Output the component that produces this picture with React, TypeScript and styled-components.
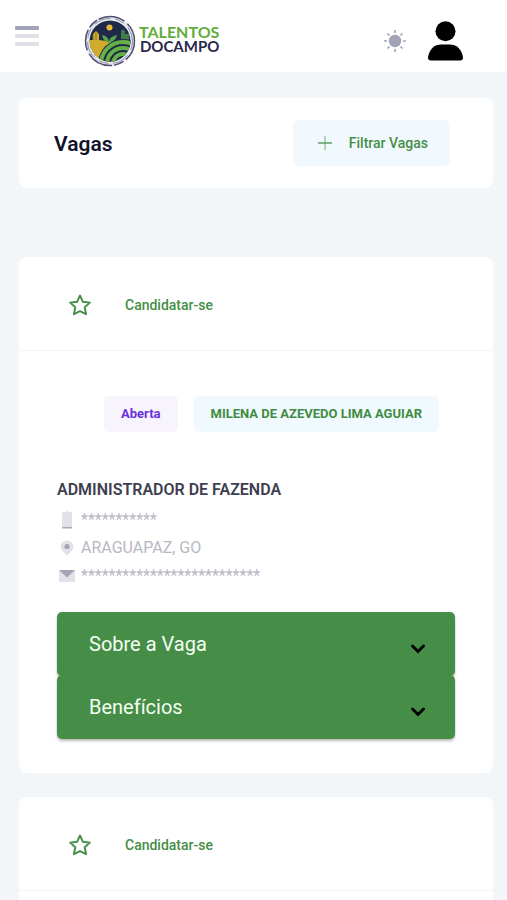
import React from 'react';
import styled, { createGlobalStyle } from 'styled-components';

const GlobalStyle = createGlobalStyle`
  *, *::before, *::after { box-sizing: border-box; }
  body {
    margin: 0;
    background: #f3f6f8;
    font-family: Roboto, sans-serif;
    color: #12122b;
  }
  button { font-family: inherit; border: 0; padding: 0; background: none; cursor: pointer; }
  svg { display: block; flex: none; }
`;

const Page = styled.div`
  display: flex;
  flex-direction: column;
  height: 100vh;
  overflow: hidden;
`;

const TopBar = styled.header`
  display: flex;
  flex: none;
  align-items: center;
  height: 72px;
  padding: 0 43px 0 15px;
  background: #fff;
`;

const MenuButton = styled.button`
  display: grid;
  gap: 4px;
  width: 24px;
`;

const MenuBar = styled.span<{ $strong?: boolean }>`
  height: 4px;
  border-radius: 1px;
  background: ${(p) => (p.$strong ? '#a3a3b8' : '#e0e0e8')};
`;

const Brand = styled.a`
  display: flex;
  align-items: center;
  gap: 3px;
  margin: 10px auto 0 45px;
  text-decoration: none;
`;

const BrandName = styled.span`
  display: grid;
  justify-items: end;
  margin-bottom: 4px;
  font: 700 15px/14px Lato, sans-serif;
  color: #29294a;
`;

const BrandGreen = styled.span`
  font-size: 16px;
  color: #62ad3d;
`;

const TopActions = styled.div`
  display: flex;
  align-items: center;
  gap: 20px;
  padding-top: 10px;
`;

const Main = styled.main`
  display: flex;
  flex: 1;
  flex-direction: column;
  min-height: 0;
  padding: 26px 14px 0 19px;
`;

const TitleCard = styled.section`
  display: flex;
  flex: none;
  align-items: center;
  justify-content: space-between;
  min-height: 90px;
  margin-bottom: 69px;
  padding: 0 43px 0 35px;
  border-radius: 8px;
  background: #fff;
`;

const Title = styled.h1`
  margin: 0;
  padding-top: 1px;
  font-size: 21px;
  line-height: 24px;
  font-weight: 600;
`;

const FilterButton = styled.button`
  display: flex;
  align-items: center;
  gap: 16px;
  height: 46px;
  padding: 0 22px 0 24px;
  border-radius: 5px;
  background: #f1f9fe;
  color: #458e46;
  font-size: 14px;
  font-weight: 500;
`;

const JobCard = styled.article<{ $last?: boolean }>`
  flex: ${(p) => (p.$last ? '1 0 auto' : 'none')};
  margin-bottom: ${(p) => (p.$last ? '0' : '24px')};
  border-radius: ${(p) => (p.$last ? '8px 8px 0 0' : '8px')};
  background: #fff;
`;

const JobActions = styled.div`
  display: flex;
  align-items: center;
  gap: 33px;
  height: 94px;
  padding: 3px 49px 0;
  border-bottom: 1px solid #f1f3f6;
`;

const IconButton = styled.button`
  color: #458e46;
`;

const ApplyButton = styled.button`
  color: #458e46;
  font-size: 14px;
  line-height: 20px;
  font-weight: 500;
`;

const JobBody = styled.div`
  padding: 45px 38px 34px;
`;

const Tags = styled.div`
  display: flex;
  justify-content: flex-end;
  gap: 16px;
  padding-right: 16px;
`;

const Tag = styled.span<{ $tone: 'violet' | 'green' }>`
  padding: 0 17px;
  border-radius: 5px;
  background: ${(p) => (p.$tone === 'violet' ? '#f7f4fe' : '#f0f9fd')};
  color: ${(p) => (p.$tone === 'violet' ? '#6932dc' : '#3f8c42')};
  font-size: 13px;
  line-height: 36px;
  font-weight: 700;
  white-space: nowrap;
`;

const JobTitle = styled.h2`
  margin: 46px 0 6px;
  color: #3e3e50;
  font-size: 16px;
  line-height: 24px;
  font-weight: 600;
`;

const Details = styled.ul`
  display: grid;
  gap: 4px;
  margin: 0 0 24px;
  padding: 0;
  list-style: none;
`;

const Detail = styled.li`
  display: flex;
  align-items: center;
  gap: 4px;
  color: #b8b8c3;
  font-size: 16px;
  line-height: 24px;
`;

const Panel = styled.button`
  display: flex;
  align-items: center;
  justify-content: space-between;
  width: 100%;
  height: 64px;
  padding: 0 28px 0 32px;
  border-radius: 5px;
  background: #468e47;
  box-shadow: 0 2px 3px rgba(0, 0, 0, 0.28);
  color: #f4fff4;
  font-size: 20px;
  line-height: 24px;

  & + & { margin-top: -1px; }
  & svg { margin-top: 10px; }
`;

function Emblem() {
  return (
    <svg width="52" height="52" viewBox="0 0 52 52" aria-hidden="true">
      <defs>
        <clipPath id="field"><circle cx="26" cy="26" r="20.5" /></clipPath>
      </defs>
      <circle cx="26" cy="26" r="23" fill="none" stroke="#e4e6ef" strokeWidth="4" />
      <circle cx="26" cy="26" r="24.5" fill="none" stroke="#4d5070" strokeWidth="1.5" strokeDasharray="21 3 10 2 27 4" />
      <circle cx="26" cy="26" r="22.5" fill="none" stroke="#777a94" strokeWidth="0.8" strokeDasharray="9 6 17 5" />
      <g clipPath="url(#field)">
        <rect width="52" height="52" fill="#20294a" />
        <path d="M4 25h5v-6l3-3 3 3v6l16 2v22H4z" fill="#d1ab2e" />
        <path d="M9 25v-5m3 5v-7" stroke="#827834" strokeWidth="1" />
        <path d="M37 27V16q2-3 4 0v11zM41 27v-8h4v8z" fill="#3e7e46" />
        <circle cx="25.500" cy="12.500" r="3" fill="#e7b735" />
        <path d="M25 28q0-7-7-8 1 6 7 8q0-7 8-8-1 6-8 8" fill="#55a448" />
        <circle cx="39" cy="49" r="25" fill="#20294a" />
        <g fill="none" stroke="#64b246" strokeWidth="4">
          <circle cx="39" cy="49" r="22" />
          <circle cx="39" cy="49" r="16" />
          <circle cx="39" cy="49" r="10" />
          <circle cx="39" cy="49" r="4" />
        </g>
      </g>
    </svg>
  );
}

function SunIcon() {
  return (
    <svg width="24" height="24" viewBox="0 0 24 24" aria-hidden="true">
      <circle cx="12" cy="12" r="6.200" fill="#a2a2b8" />
      <path d="M12 1v3M12 20v3M1 12h3M20 12h3M4.500 4.500l2 2M17.500 17.500l2 2M4.500 19.500l2-2M17.500 6.500l2-2" stroke="#a2a2b8" strokeWidth="1.600" />
    </svg>
  );
}

function UserIcon() {
  return (
    <svg width="37" height="40" viewBox="0 0 37 40" aria-hidden="true">
      <circle cx="18.500" cy="10.200" r="10" />
      <path d="M1 36.500C2 28 8 23.500 14 23.500h9c6 0 12 4.500 13 13Q36 39.500 33 39.500H4Q1 39.500 1 36.500z" />
    </svg>
  );
}

function StarIcon() {
  return (
    <svg width="24" height="24" viewBox="0 0 24 24" fill="none" stroke="currentColor" strokeWidth="1.900" strokeLinejoin="round" aria-hidden="true">
      <path d="M12 2.500l2.900 6.300 7 .8-5.200 4.600 1.400 7-6.100-3.100-6.100 3.100 1.400-7-5.200-4.600 7-.8z" />
    </svg>
  );
}

function PlusIcon() {
  return (
    <svg width="16" height="16" viewBox="0 0 16 16" aria-hidden="true">
      <path d="M8 1v14" stroke="#9bc99d" strokeWidth="1.500" />
      <path d="M1 8h14" stroke="#5c9e60" strokeWidth="1.500" />
    </svg>
  );
}

function PhoneIcon() {
  return (
    <svg width="20" height="20" viewBox="0 0 20 20" aria-hidden="true">
      <path d="M5 2h4V1h2v1h4v15H5z" fill="#e1e2e9" />
      <path d="M5 17h10v1.500H5z" fill="#a9aab9" />
    </svg>
  );
}

function PinIcon() {
  return (
    <svg width="20" height="20" viewBox="0 0 20 20" aria-hidden="true">
      <path d="M10 17.500C7 14.500 3.500 11.500 3.500 8.500a6.500 6 0 0 1 13 0c0 3-3.500 6-6.500 9z" fill="#e1e2e9" />
      <circle cx="10" cy="8.500" r="2.600" fill="#a3a4b5" />
    </svg>
  );
}

function MailIcon() {
  return (
    <svg width="20" height="20" viewBox="0 0 20 20" aria-hidden="true">
      <path d="M2 4h16v12H2z" fill="#e1e2e9" />
      <path d="M2 4h16l-8 7.500z" fill="#a3a4b5" />
    </svg>
  );
}

function ChevronIcon() {
  return (
    <svg width="18" height="12" viewBox="0 0 18 12" fill="none" stroke="#000" strokeWidth="3" strokeLinecap="round" aria-hidden="true">
      <path d="M3.500 3L9 8.500 14.500 3" />
    </svg>
  );
}

function CardActions() {
  return (
    <JobActions>
      <IconButton type="button" aria-label="Favoritar vaga"><StarIcon /></IconButton>
      <ApplyButton type="button">Candidatar-se</ApplyButton>
    </JobActions>
  );
}

export default function App() {
  return (
    <Page>
      <GlobalStyle />
      <TopBar>
        <MenuButton type="button" aria-label="Abrir menu">
          <MenuBar $strong />
          <MenuBar />
          <MenuBar />
        </MenuButton>
        <Brand href="#" aria-label="Talentos do Campo">
          <Emblem />
          <BrandName>
            <BrandGreen>TALENTOS</BrandGreen>
            <span>DOCAMPO</span>
          </BrandName>
        </Brand>
        <TopActions>
          <IconButton type="button" aria-label="Alternar tema"><SunIcon /></IconButton>
          <IconButton type="button" aria-label="Perfil"><UserIcon /></IconButton>
        </TopActions>
      </TopBar>
      <Main>
        <TitleCard>
          <Title>Vagas</Title>
          <FilterButton type="button"><PlusIcon />Filtrar Vagas</FilterButton>
        </TitleCard>
        <JobCard>
          <CardActions />
          <JobBody>
            <Tags>
              <Tag $tone="violet">Aberta</Tag>
              <Tag $tone="green">MILENA DE AZEVEDO LIMA AGUIAR</Tag>
            </Tags>
            <JobTitle>ADMINISTRADOR DE FAZENDA</JobTitle>
            <Details>
              <Detail><PhoneIcon />***********</Detail>
              <Detail><PinIcon />ARAGUAPAZ, GO</Detail>
              <Detail><MailIcon />**************************</Detail>
            </Details>
            <Panel type="button" aria-expanded="false">Sobre a Vaga<ChevronIcon /></Panel>
            <Panel type="button" aria-expanded="false">Benefícios<ChevronIcon /></Panel>
          </JobBody>
        </JobCard>
        <JobCard $last>
          <CardActions />
        </JobCard>
      </Main>
    </Page>
  );
}
